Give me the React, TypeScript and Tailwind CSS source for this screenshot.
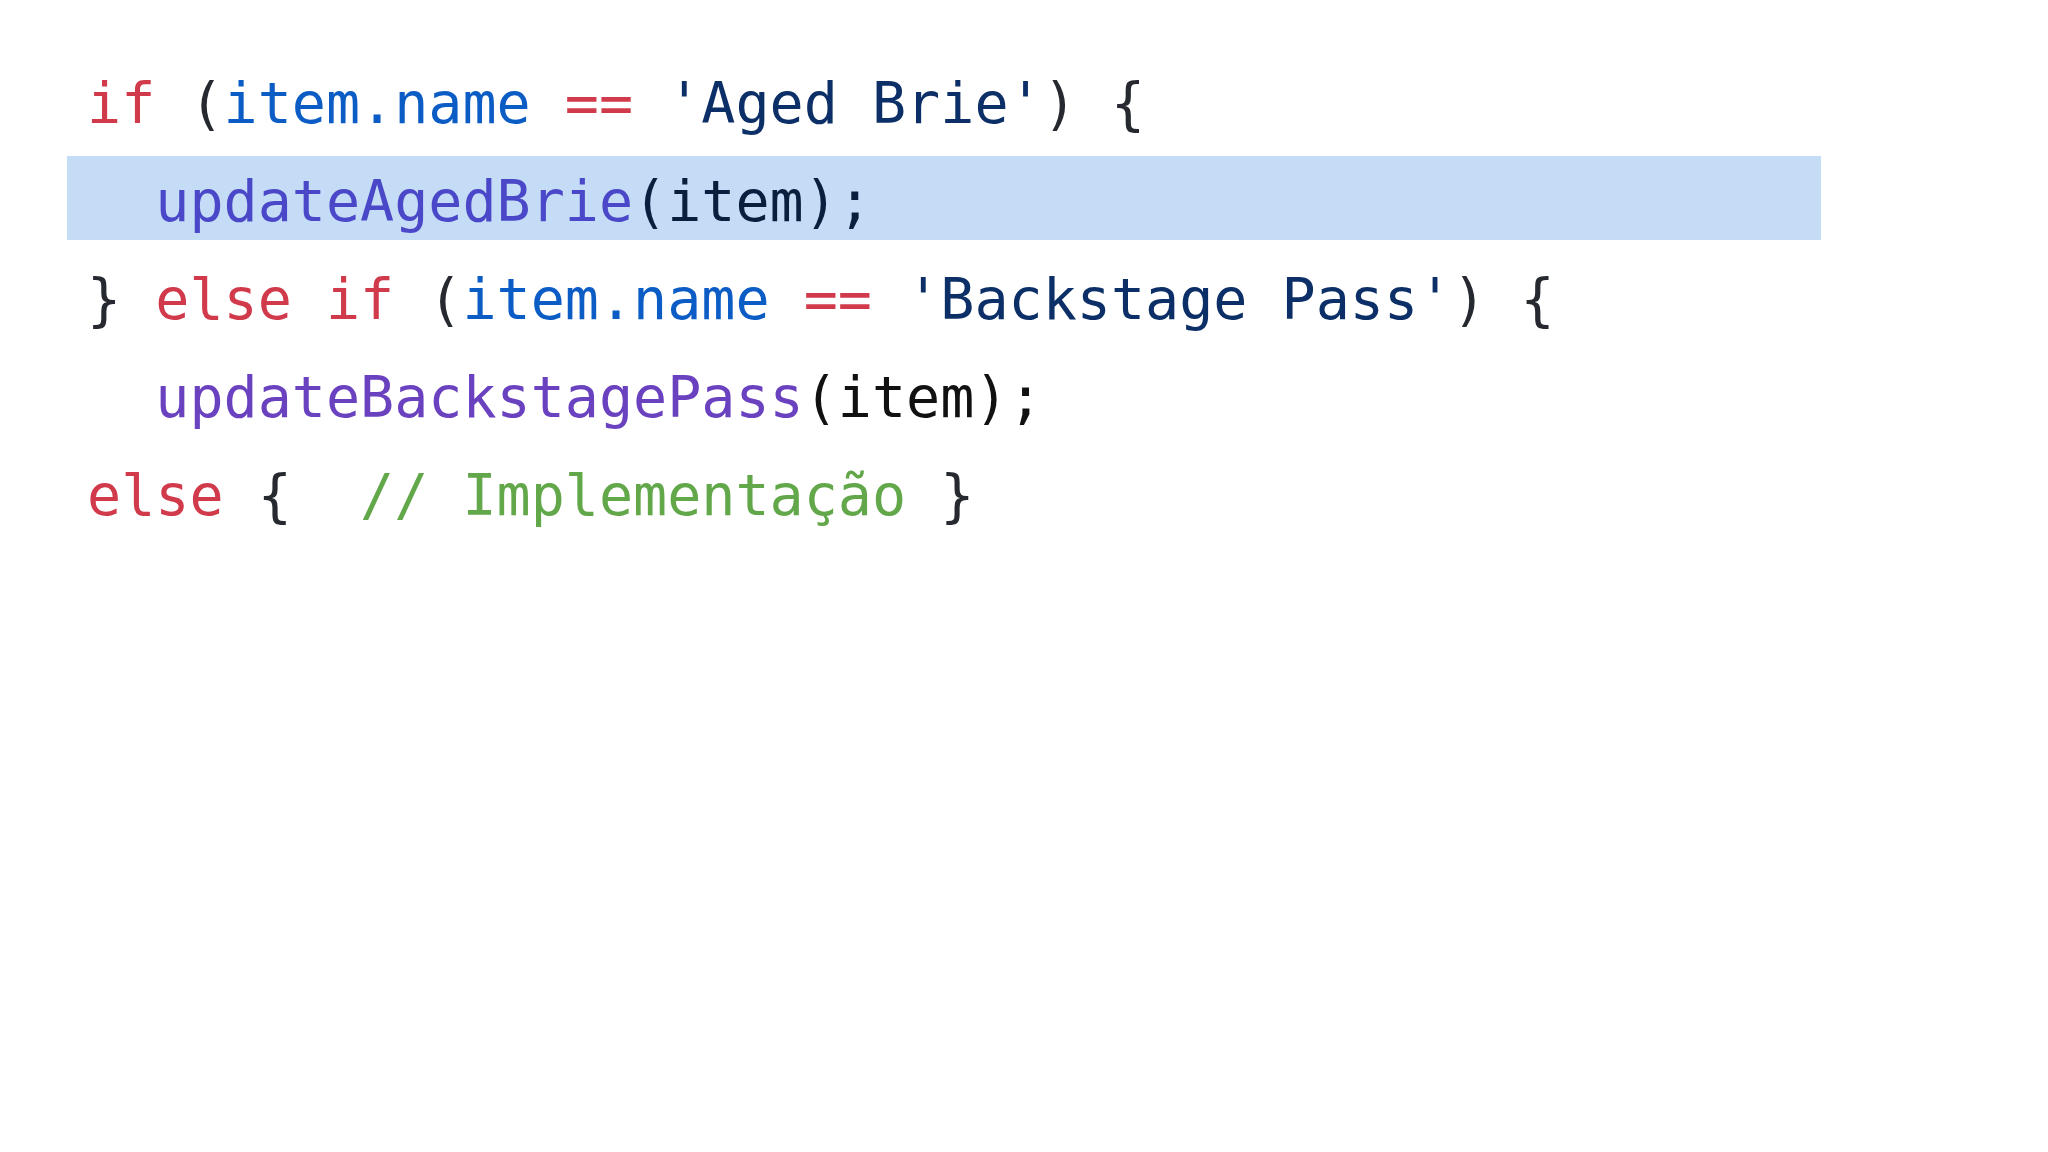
const MONO = "font-['DejaVu_Sans_Mono','Liberation_Mono',monospace]";

const kw = "text-[#d03a4b]";
const prop = "text-[#0b5cc4]";
const str = "text-[#0b2f66]";
const punc = "text-[#262a30]";

export default function App() {
  return (
    <div className="min-h-[1152px] w-[2048px] bg-white">
      <div className={`${MONO} pt-[54px] text-[56.7px] leading-[98px] tracking-normal`}>
        {/* line 1 */}
        <div className="h-[98px] whitespace-pre pl-[87px]">
          <span className={kw}>if</span>
          <span className={punc}> (</span>
          <span className={prop}>item.name</span>
          <span className={kw}> == </span>
          <span className={str}>'Aged Brie'</span>
          <span className={punc}>) {"{"}</span>
        </div>

        {/* line 2 - highlighted */}
        <div className="relative h-[98px] whitespace-pre pl-[87px]">
          <div className="absolute left-[67px] top-[4px] h-[84px] w-[1754px] bg-[#c5dcf6]" />
          <span className="relative">
            <span>  </span>
            <span className="text-[#4a48c8]">updateAgedBrie</span>
            <span className="text-[#0a1f3d]">(item);</span>
          </span>
        </div>

        {/* line 3 */}
        <div className="h-[98px] whitespace-pre pl-[87px]">
          <span className={punc}>{"} "}</span>
          <span className={kw}>else if</span>
          <span className={punc}> (</span>
          <span className={prop}>item.name</span>
          <span className={kw}> == </span>
          <span className={str}>'Backstage Pass'</span>
          <span className={punc}>) {"{"}</span>
        </div>

        {/* line 4 */}
        <div className="h-[98px] whitespace-pre pl-[87px]">
          <span>  </span>
          <span className="text-[#6a42c0]">updateBackstagePass</span>
          <span className="text-[#111111]">(item);</span>
        </div>

        {/* line 5 */}
        <div className="h-[98px] whitespace-pre pl-[87px]">
          <span className={kw}>else</span>
          <span className={punc}> {"{"}  </span>
          <span className="text-[#62a84a]">// Implementação</span>
          <span className={punc}> {"}"}</span>
        </div>
      </div>
    </div>
  );
}
